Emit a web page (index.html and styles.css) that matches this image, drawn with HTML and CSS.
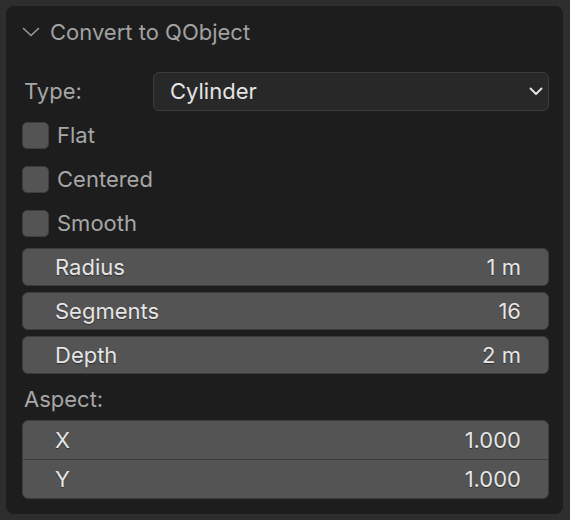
FILE: index.html
```html
<!DOCTYPE html>
<html>
<head>
<meta charset="utf-8">
<link rel="stylesheet" href="styles.css">
</head>
<body>
<div class="panel">
  <div class="header">
    <svg class="hchev" width="18" height="10" viewBox="0 0 18 10"><path d="M1.5 1.5 L9 8.5 L16.5 1.5" fill="none" stroke="#9a9a9a" stroke-width="1.6" stroke-linecap="round" stroke-linejoin="round"/></svg>
    <span class="htitle">Convert to QObject</span>
  </div>
  <div class="row type-row">
    <span class="label">Type:</span>
    <div class="dropdown">
      <span class="dd-text">Cylinder</span>
      <svg class="ddchev" width="14" height="9" viewBox="0 0 14 9"><path d="M1.5 1.5 L7 7 L12.5 1.5" fill="none" stroke="#e2e2e2" stroke-width="2" stroke-linecap="round" stroke-linejoin="round"/></svg>
    </div>
  </div>
  <div class="row check-row"><span class="box"></span><span class="label">Flat</span></div>
  <div class="row check-row"><span class="box"></span><span class="label">Centered</span></div>
  <div class="row check-row"><span class="box"></span><span class="label">Smooth</span></div>
  <div class="row"><div class="field"><span>Radius</span><span>1 m</span></div></div>
  <div class="row"><div class="field"><span>Segments</span><span>16</span></div></div>
  <div class="row"><div class="field"><span>Depth</span><span>2 m</span></div></div>
  <div class="aspect-label label">Aspect:</div>
  <div class="group">
    <div class="field gtop"><span>X</span><span>1.000</span></div>
    <div class="field gbot"><span>Y</span><span>1.000</span></div>
  </div>
</div>
</body>
</html>
```
FILE: styles.css
```css
html, body {
  margin: 0;
  padding: 0;
  background: #2e2e2e;
  width: 570px;
  height: 520px;
  overflow: hidden;
}
body {
  font-family: "Inter", "DejaVu Sans", sans-serif;
  font-size: 22px;
  padding: 6px 7px 6px 6px;
  box-sizing: border-box;
}
.panel {
  box-sizing: border-box;
  width: 557px;
  height: 508px;
  background: #1d1d1d;
  border-radius: 8px;
  padding: 0 14px 0 16px;
  display: flex;
  flex-direction: column;
}
.header {
  height: 52px;
  display: flex;
  align-items: center;
  margin-bottom: 11px;
}
.hchev { margin-left: 0; margin-right: 10px; }
.htitle { color: #a2a2a2; }
.row {
  height: 44px;
  display: flex;
  align-items: center;
  flex: none;
}
.label { color: #a7a7a7; }
.type-row .label { margin-left: 2px; width: 129px; }
.dropdown {
  box-sizing: border-box;
  flex: 1;
  height: 39px;
  background: #282828;
  border: 1px solid #3c3c3c;
  border-radius: 6px;
  display: flex;
  align-items: center;
  justify-content: space-between;
  padding: 0 5px 0 16px;
}
.dd-text { color: #e4e4e4; }
.box {
  box-sizing: border-box;
  width: 27px;
  height: 27px;
  background: #545454;
  border: 1px solid #3e3e3e;
  border-radius: 5px;
  margin-right: 8px;
}
.field {
  box-sizing: border-box;
  flex: 1;
  height: 38px;
  background: #545454;
  border: 1px solid #3d3d3d;
  border-radius: 6px;
  display: flex;
  align-items: center;
  justify-content: space-between;
  padding: 0 27px 0 32px;
  color: #e6e6e6;
  text-shadow: 0 1px 1px rgba(0,0,0,0.45);
}
.aspect-label {
  height: 43px;
  display: flex;
  align-items: center;
  margin-left: 2px;
  flex: none;
}
.group {
  display: flex;
  flex-direction: column;
  border: 1px solid #3d3d3d;
  border-radius: 6px;
  overflow: hidden;
  background: #3d3d3d;
  gap: 1px;
}
.group .field {
  border: none;
  border-radius: 0;
  height: 38px;
  flex: none;
}
```
